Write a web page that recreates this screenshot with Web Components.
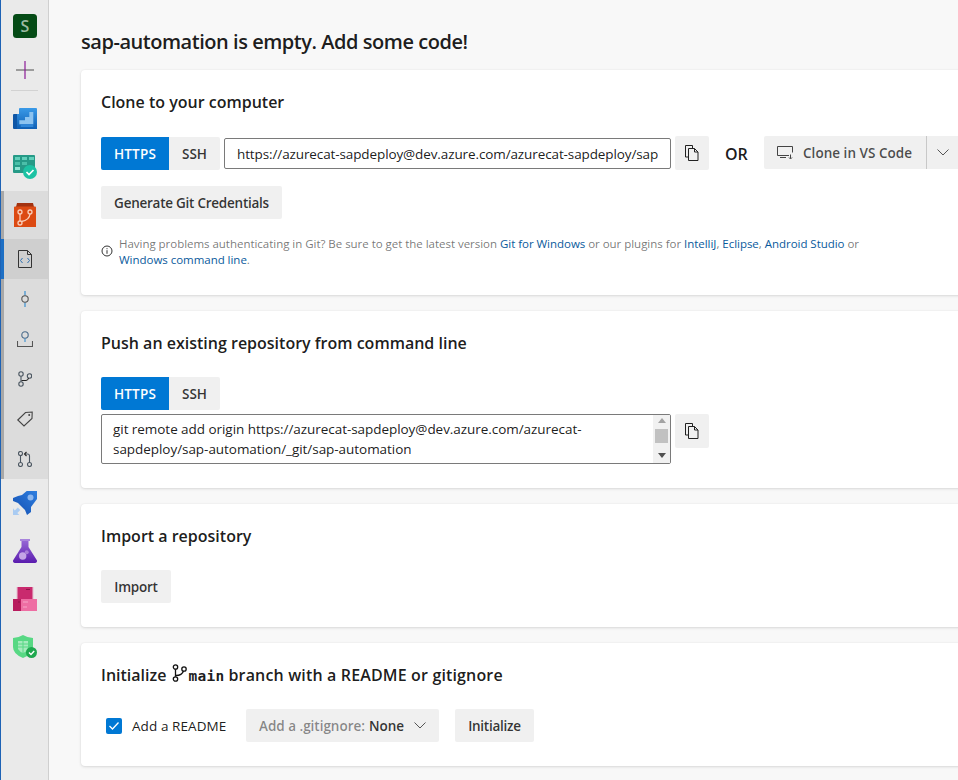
<!DOCTYPE html>
<html>
<head>
<meta charset="utf-8">
<title>sap-automation</title>
<style>
html,body{margin:0;height:100%;overflow:hidden;}
body{display:flex;width:958px;height:780px;background:#f8f8f8;font-family:"Open Sans","Noto Sans",sans-serif;color:rgba(0,0,0,.9);}
</style>
</head>
<body>
<az-sidebar>
  <az-nav h="48"><svg width="24" height="24" viewBox="0 0 24 24"><rect width="24" height="24" rx="3.500" fill="#054b16"/><text x="12" y="17.500" text-anchor="middle" font-family="Open Sans" font-size="16" font-weight="600" fill="#9dbba3">S</text></svg></az-nav>
  <az-nav h="40"><svg width="18" height="18" viewBox="0 0 18 18"><path d="M0 9h18" stroke="#7a7a7a" stroke-width="1.400"/><path d="M9 0v18" stroke="#8a1a96" stroke-width="1.200"/></svg></az-nav>
  <az-nav-sep></az-nav-sep>
  <az-nav h="48"><svg width="24" height="24" viewBox="0 0 24 24"><defs><linearGradient id="bd" x1="0" y1="0" x2="0" y2="1"><stop offset="0" stop-color="#3a9ae8"/><stop offset="1" stop-color="#0f5fb4"/></linearGradient></defs><path d="M0 8a1 1 0 0 1 1-1h4v15H1a1 1 0 0 1-1-1z" fill="#0f56a6"/><path d="M4 7h2V2a1 1 0 0 1 1-1h16a1 1 0 0 1 1 1v20H4z" fill="url(#bd)"/><path d="M6.300 17.300v-4H12V10h4.300V5h4v12.300z" fill="#8cc3f0"/><path d="M7.700 17.300h12.600V20H7.700z" fill="#2f86d8"/></svg></az-nav>
  <az-nav h="48"><svg width="24" height="24" viewBox="0 0 24 24"><rect width="22" height="18" rx="1" fill="#269a87"/><path d="M2 2h5v3H2zM9 2h5v3H9zM16 2h5v3h-5z" fill="#62d0bb"/><path d="M2 7h5v3H2zM9 7h5v3H9z" fill="#4bbfa9"/><path d="M2 12h5v3H2z" fill="#8fe3d3"/><circle cx="17" cy="17" r="7" fill="#1cc2a3"/><path d="M13.500 17l2.500 2.500 4.500-4.500" fill="none" stroke="#fff" stroke-width="1.700"/></svg></az-nav>
  <az-nav-group>
    <az-nav h="48"><svg width="24" height="24" viewBox="0 0 24 24"><path d="M4 0h16l1 4H3z" fill="#a3320f"/><path d="M1 4.500a1 1 0 0 1 1-1h20a1 1 0 0 1 1 1V24H1z" fill="#dc4a12"/><g fill="none" stroke="#f9cdb8" stroke-width="1.300"><circle cx="7" cy="9" r="2"/><circle cx="7" cy="20" r="2"/><circle cx="17" cy="9" r="2"/><path d="M7 11v7M8.500 18.500q8-1.500 8.500-7.500"/></g></svg></az-nav>
    <az-nav h="40" selected><svg width="16" height="18" viewBox="0 0 16 18"><g fill="none" stroke-width="1"><path d="M1.500.5h9l4 4v13h-13z" stroke="#333"/><path d="M10.500.5v4h4" stroke="#333"/><path d="M5.500 8l-2 2.500 2 2.500M10.500 8l2 2.500-2 2.500" stroke="#2d6fb0"/></g></svg></az-nav>
    <az-nav h="40"><svg width="8" height="16" viewBox="0 0 8 16"><path d="M4 0v4.500M4 11.500V16" stroke="#3a8fd0" stroke-width="1.200"/><circle cx="4" cy="8" r="3.200" fill="none" stroke="#555" stroke-width="1.100"/></svg></az-nav>
    <az-nav h="40"><svg width="16" height="16" viewBox="0 0 16 16"><circle cx="8" cy="4" r="3.200" fill="none" stroke="#4a6b8a" stroke-width="1.100"/><path d="M8 7.500V11" stroke="#3a8fd0" stroke-width="1.100"/><path d="M.5 10v5.500h15V10" fill="none" stroke="#555" stroke-width="1.100"/></svg></az-nav>
    <az-nav h="40"><svg width="14" height="16" viewBox="0 0 14 16"><g fill="none" stroke="#4a5560" stroke-width="1.100"><circle cx="3" cy="3" r="2.200"/><circle cx="3" cy="13" r="2.200"/><circle cx="11.500" cy="5" r="2.200"/><path d="M3 5.200v5.600"/><path d="M3.500 9.500h4.500a3 3 0 0 0 2.500-2.500" stroke="#222"/></g></svg></az-nav>
    <az-nav h="40"><svg width="16" height="16" viewBox="0 0 16 16"><path d="M.8 9L8.500 1.500l6.700-.5-.2 6.500L7 15z" fill="none" stroke="#444" stroke-width="1.100"/><circle cx="12.200" cy="4" r="1" fill="#444"/></svg></az-nav>
    <az-nav h="40"><svg width="14" height="16" viewBox="0 0 14 16"><g fill="none" stroke="#4a5560" stroke-width="1.100"><circle cx="2.500" cy="2.500" r="2"/><circle cx="2.500" cy="13.500" r="2"/><circle cx="11.500" cy="13.500" r="2"/><path d="M2.500 4.500v7M11.500 11.500V5a2 2 0 0 0-2-2H7"/><path d="M8.500 1L6.500 3l2 2" stroke="#222"/></g></svg></az-nav>
  </az-nav-group>
  <az-nav h="48"><svg width="24" height="24" viewBox="0 0 24 24"><defs><linearGradient id="rk" x1="1" y1="0" x2="0" y2="1"><stop offset="0" stop-color="#2f7fe0"/><stop offset="1" stop-color="#134eb0"/></linearGradient></defs><path d="M13.700 0H24v8l-6 8v5l-4 3-2-5-7-7-5-2V7l5-2 4-1z" fill="url(#rk)"/><circle cx="17.500" cy="6.500" r="3" fill="#8bb6ee"/><path d="M0 17.300V24h6.300l-2-2 3-3-2.500-2.500-3 3z" fill="#a9cbf2"/></svg></az-nav>
  <az-nav h="48"><svg width="24" height="24" viewBox="0 0 24 24"><defs><linearGradient id="fl" x1="0" y1="0" x2="0" y2="1"><stop offset="0" stop-color="#9a6cd8"/><stop offset="1" stop-color="#5a1cae"/></linearGradient></defs><path d="M7 0h10v2h-1.500v6L24 21.500a2 2 0 0 1-2 2.500H2a2 2 0 0 1-2-2.500L8.500 8V2H7z" fill="url(#fl)"/><path d="M7 0h10v2H7z" fill="#a884dc"/><circle cx="9.700" cy="17" r="3.700" fill="#c4a4e6"/><circle cx="13.700" cy="13.300" r="2" fill="#a87fd8"/></svg></az-nav>
  <az-nav h="48"><svg width="24" height="24" viewBox="0 0 24 24"><rect x="3.700" y="0" width="16.600" height="12" fill="#e0a0bc"/><rect x="4.700" y="0" width="14.600" height="12" fill="#c92a6e"/><rect x="0" y="12" width="8" height="12" fill="#b81c5e"/><rect x="8" y="12" width="16" height="12" fill="#ee6ea3"/><path d="M10 15h5M10 20h4" stroke="#f6a6c8"/><path d="M5 15h2M13 2.500h4" stroke="#8f1549"/></svg></az-nav>
  <az-nav h="48"><svg width="24" height="24" viewBox="0 0 24 24"><path d="M0 3q5 0 10-3 5 3 10 3v9q0 7-10 11Q0 19 0 12z" fill="#58d884"/><path d="M5 6h10v8q-2 3-5 4-3-1-5-4z" fill="#a6eabd"/><path d="M5 9h10M5 12h10M10 5v13" stroke="#58d884"/><circle cx="18.500" cy="17.500" r="5.500" fill="#1fa84f"/><path d="M16 17.500l2 2 3.200-3.400" fill="none" stroke="#fff" stroke-width="1.400"/></svg></az-nav>
</az-sidebar>

<az-main>
  <h1 slot="title">sap-automation is empty. Add some code!</h1>

  <az-card heading="Clone to your computer" h="225">
    <az-row>
      <az-tabs mt="1"></az-tabs>
      <az-url>https://azurecat-sapdeploy@dev.azure.com/azurecat-sapdeploy/sap</az-url>
      <az-copy></az-copy>
      <az-or>OR</az-or>
      <az-split>Clone in VS Code</az-split>
    </az-row>
    <az-btn mt="16" w="181">Generate Git Credentials</az-btn>
    <az-info>Having problems authenticating in Git? Be sure to get the latest version <a>Git for Windows</a> or our plugins for <a>IntelliJ</a>, <a>Eclipse</a>, <a>Android Studio</a> or<br><a>Windows command line</a>.</az-info>
  </az-card>

  <az-card heading="Push an existing repository from command line" h="177">
    <az-tabs></az-tabs>
    <az-row top>
      <az-command>git remote add origin https://azurecat-sapdeploy@dev.azure.com/azurecat-<br>sapdeploy/sap-automation/_git/sap-automation</az-command>
      <az-copy></az-copy>
    </az-row>
  </az-card>

  <az-card heading="Import a repository" h="123">
    <az-btn w="70">Import</az-btn>
  </az-card>

  <az-card h="123">
    <az-init-title slot="heading"></az-init-title>
    <az-row>
      <az-check>Add a README</az-check>
      <az-drop></az-drop>
      <az-btn w="79" ml="16">Initialize</az-btn>
    </az-row>
  </az-card>
</az-main>

<script>
// small helper so each element only has to hand over its css and markup
class Base extends HTMLElement {
  constructor() {
    super();
    this.attachShadow({mode: 'open'});
  }
  connectedCallback() {
    this.shadowRoot.innerHTML = '<style>' + this.css() + '</style>' + this.html();
  }
  css() { return ':host{display:block;}'; }
  html() { return '<slot></slot>'; }
}

const COPY_ICON = `<svg width="16" height="16" viewBox="0 0 16 16" fill="none" stroke="#222" stroke-width="1"><path d="M1.500.5h7v3M1.500.5v11.500h3"/><path d="M4.500 3.500h6l3.500 3.500v8.500H4.500z"/><path d="M10.500 3.500V7H14"/></svg>`;
const CHEVRON = `<svg width="12" height="7" viewBox="0 0 12 7" fill="none" stroke="#555" stroke-width="1"><path d="M.5.5L6 6 11.500.5"/></svg>`;

customElements.define('az-sidebar', class extends Base {
  css() { return `
    :host{display:flex;flex-direction:column;box-sizing:border-box;flex:none;width:49px;height:780px;padding-top:2px;
      background:#eaeaea;border-left:1px solid #1d62b5;border-right:1px solid #cfcfcf;}`; }
});

customElements.define('az-nav-sep', class extends Base {
  css() { return ':host{display:block;flex:none;height:1px;background:#d2d2d2;margin:0 10px 4px;}'; }
  html() { return ''; }
});

customElements.define('az-nav', class extends Base {
  css() {
    const h = this.getAttribute('h') || 40;
    return `:host{display:flex;align-items:center;justify-content:center;height:${h}px;flex:none;padding-left:1px;box-sizing:border-box;}
      :host([selected]){background:#cfcfcf;box-shadow:inset 3px 0 0 #1d6fc4;}
      ::slotted(svg){display:block;}`;
  }
});

customElements.define('az-nav-group', class extends Base {
  css() { return ':host{display:block;background:#dcdcdc;box-shadow:inset 3px 0 0 #a8a8a8;}'; }
});

customElements.define('az-main', class extends Base {
  css() { return `
    :host{display:block;flex:1;min-width:0;padding:0 0 0 32px;box-sizing:border-box;overflow:hidden;}
    .list{display:flex;flex-direction:column;gap:16px;width:960px;}
    ::slotted(h1){margin:0;height:70px;display:flex;align-items:center;padding-top:12px;box-sizing:border-box;font-size:20px;font-weight:600;letter-spacing:-.46px;color:rgba(0,0,0,.9);}`; }
  html() { return '<slot name="title"></slot><div class="list"><slot></slot></div>'; }
});

customElements.define('az-card', class extends Base {
  css() {
    const h = this.getAttribute('h');
    return `:host{display:block;box-sizing:border-box;height:${h}px;padding:20px;background:#fff;border-radius:4px;
        box-shadow:0 1px 3px rgba(0,0,0,.12),0 0 2px rgba(0,0,0,.06);}
      .head{font-size:16px;font-weight:600;line-height:24px;height:24px;margin-bottom:22px;white-space:nowrap;color:rgba(0,0,0,.9);}
      .body{display:block;}`;
  }
  html() {
    const t = this.getAttribute('heading') || '';
    return `<div class="head">${t}<slot name="heading"></slot></div><div class="body"><slot></slot></div>`;
  }
});

customElements.define('az-row', class extends Base {
  css() { return `:host{display:flex;align-items:center;}
    :host([top]){align-items:flex-start;margin-top:4px;}`; }
});

customElements.define('az-tabs', class extends Base {
  css() {
    const mt = this.getAttribute('mt') || 0;
    return `:host{display:flex;height:33px;flex:none;align-self:flex-start;margin-top:${mt}px;font-size:13.500px;font-weight:600;color:rgba(0,0,0,.8);}
    span{display:flex;align-items:center;justify-content:center;}
    .on{width:68px;background:#0078d4;color:#fff;border-radius:2px 0 0 2px;letter-spacing:.2px;}
    .off{width:51px;background:#f0f0f0;border-radius:0 2px 2px 0;}`;
  }
  html() { return '<span class="on">HTTPS</span><span class="off">SSH</span>'; }
});

customElements.define('az-url', class extends Base {
  css() { return `:host{display:flex;align-items:center;box-sizing:border-box;flex:none;width:447px;height:31px;align-self:flex-start;margin:2px 0 0 4px;padding:0 12px;
      border:1px solid #7a7a7a;border-radius:2px;font-size:13.500px;letter-spacing:-.11px;white-space:nowrap;overflow:hidden;color:rgba(0,0,0,.9);}`; }
});

customElements.define('az-copy', class extends Base {
  css() { return `:host{display:flex;align-items:center;justify-content:center;flex:none;width:34px;height:34px;margin-left:4px;background:#f0f0f0;border-radius:2px;}
    svg{display:block;}`; }
  html() { return COPY_ICON; }
});

customElements.define('az-or', class extends Base {
  css() { return ':host{display:block;flex:none;width:24px;margin:2px 15px 0 16px;font-size:16px;font-weight:600;color:rgba(0,0,0,.9);}'; }
});

customElements.define('az-split', class extends Base {
  css() { return `:host{display:flex;flex:none;height:33px;align-self:flex-start;font-size:13.500px;font-weight:600;letter-spacing:.03px;color:rgba(0,0,0,.7);}
    .main{display:flex;align-items:center;gap:10px;width:162px;box-sizing:border-box;padding-left:13px;background:#f0f0f0;border-radius:2px 0 0 2px;}
    .more{display:flex;align-items:center;justify-content:center;width:32px;background:#f0f0f0;border-left:1px solid #c8c8c8;}`; }
  html() { return `<div class="main"><svg width="16" height="14" viewBox="0 0 16 14" fill="none" stroke="#444" stroke-width="1"><path d="M12 9.500H.5V.5h15v6"/><path d="M3 11.500h6"/><path d="M13.500 8.500v4M12 11.500l1.500 1.500 1.500-1.500"/></svg><slot></slot></div><div class="more">${CHEVRON}</div>`; }
});

customElements.define('az-btn', class extends Base {
  css() {
    const mt = this.getAttribute('mt') || 0, ml = this.getAttribute('ml') || 0, w = this.getAttribute('w');
    return `:host{display:flex;align-items:center;justify-content:center;flex:none;width:${w}px;height:33px;margin-top:${mt}px;margin-left:${ml}px;
      background:#f0f0f0;border-radius:2px;font-size:13.500px;font-weight:600;letter-spacing:-.25px;white-space:nowrap;color:rgba(0,0,0,.8);}`;
  }
});

customElements.define('az-info', class extends Base {
  css() { return `:host{display:flex;gap:6px;margin-top:17px;font-size:11.500px;line-height:16px;letter-spacing:-.03px;white-space:nowrap;color:rgba(0,0,0,.55);}
    svg{flex:none;margin:9px 0 0 0;display:block;}
    .text{display:block;}
    ::slotted(a){color:#0a5a9c;}
    `; }
  html() { return `<svg width="12" height="12" viewBox="0 0 12 12"><circle cx="6" cy="6" r="5" fill="none" stroke="#333"/><path d="M6 5.200v3.600M6 3.200v1" stroke="#333"/></svg><div class="text"><slot></slot></div>`; }
});

customElements.define('az-command', class extends Base {
  css() { return `:host{display:flex;box-sizing:border-box;flex:none;width:570px;height:50px;border:1px solid #7a7a7a;border-radius:2px;font-size:13.500px;line-height:20px;letter-spacing:-.05px;color:rgba(0,0,0,.9);}
    .text{flex:1;padding:4px 11px;white-space:nowrap;overflow:hidden;}
    .bar{flex:none;width:17px;display:flex;flex-direction:column;align-items:center;background:#f1f1f1;}
    .up,.down{width:0;height:0;border:4px solid transparent;}
    .up{margin-top:3px;border-top:0;border-bottom:5px solid #a3a3a3;}
    .thumb{width:13px;height:14px;margin-top:6px;background:#c1c1c1;}
    .down{margin-top:auto;margin-bottom:5px;border-bottom:0;border-top:5px solid #505050;}`; }
  html() { return '<div class="text"><slot></slot></div><div class="bar"><i class="up"></i><i class="thumb"></i><i class="down"></i></div>'; }
});

customElements.define('az-init-title', class extends Base {
  css() { return `:host{display:inline-flex;align-items:center;height:24px;}
    svg{display:block;margin:-4px 1px 0 6px;}
    code{font-family:"DejaVu Sans Mono","Liberation Mono",monospace;font-weight:700;font-size:14.500px;letter-spacing:.3px;margin-right:4px;margin-top:1px;}
    span{letter-spacing:.15px;}`; }
  html() { return `Initialize<svg width="15" height="18" viewBox="0 0 15 18" fill="none" stroke="#111" stroke-width="1.300"><circle cx="3.500" cy="3" r="2.200"/><circle cx="3.500" cy="15" r="2.200"/><circle cx="12" cy="5" r="2.200"/><path d="M3.500 5.200v7.600M4 11.500q6 0 7.500-4.500"/></svg><code>main</code><span>branch with a README or gitignore</span>`; }
});

customElements.define('az-check', class extends Base {
  css() { return `:host{display:flex;align-items:center;flex:none;width:145px;padding-left:5px;box-sizing:border-box;gap:10px;font-size:13.500px;letter-spacing:.08px;white-space:nowrap;color:rgba(0,0,0,.9);}
    i{display:flex;align-items:center;justify-content:center;width:16px;height:16px;background:#0078d4;border-radius:2px;flex:none;}
    svg{display:block;}`; }
  html() { return `<i><svg width="12" height="10" viewBox="0 0 12 10" fill="none" stroke="#fff" stroke-width="1.300"><path d="M1.500 5l3 3 6-6.500"/></svg></i><slot></slot>`; }
});

customElements.define('az-drop', class extends Base {
  css() { return `:host{display:flex;align-items:center;box-sizing:border-box;flex:none;width:193px;height:33px;padding-left:13px;background:#f0f0f0;border-radius:2px;font-size:13.500px;letter-spacing:-.02px;font-weight:600;white-space:nowrap;color:rgba(0,0,0,.45);}
    b{font-weight:600;color:rgba(0,0,0,.8);margin-left:4px;}
    svg{margin-left:10px;display:block;}`; }
  html() { return `Add a .gitignore:<b>None</b>${CHEVRON}`; }
});
</script>
</body>
</html>
